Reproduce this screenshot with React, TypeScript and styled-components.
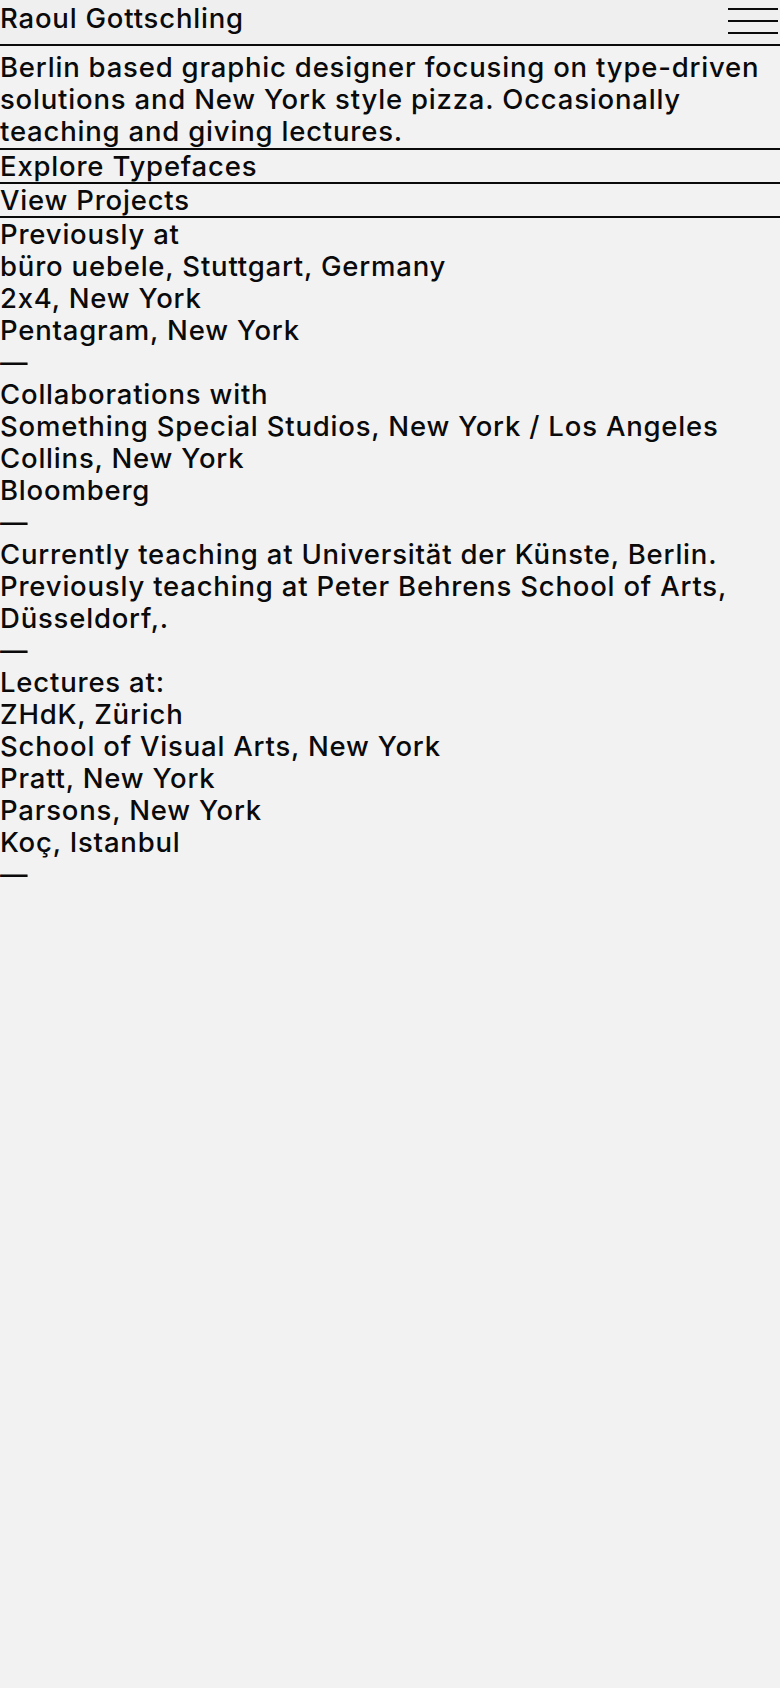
import React from "react";
import styled, { createGlobalStyle } from "styled-components";

const GlobalStyle = createGlobalStyle`
  html, body { margin: 0; padding: 0; background: #f2f2f2; }
  body {
    font-family: Inter, "Liberation Sans", sans-serif;
    color: #0a0a0a;
    -webkit-font-smoothing: antialiased;
  }
`;

const Page = styled.div`
  font-size: 27.5px;
  font-weight: 450;
  line-height: 32px;
  letter-spacing: 0.8px;
  background: #f2f2f2;
  min-height: 1688px;
`;

const Header = styled.header`
  display: flex;
  justify-content: space-between;
  align-items: flex-start;
  height: 44px;
  background: #efefef;
  border-bottom: 2px solid #0a0a0a;
`;

const Title = styled.h1`
  margin: 2px 0 0 0;
  font-size: inherit;
  font-weight: inherit;
  line-height: 32px;
`;

const MenuButton = styled.button`
  display: flex;
  flex-direction: column;
  gap: 10px;
  width: 50px;
  margin: 8px 2px 0 0;
  padding: 0;
  border: 0;
  background: transparent;
  cursor: pointer;
`;

const MenuLine = styled.span`
  display: block;
  width: 100%;
  height: 2px;
  background: #0a0a0a;
`;

const Bio = styled.p`
  margin: 0;
  padding-top: 5px;
  padding-bottom: 1px;
  border-bottom: 2px solid #0a0a0a;
`;

const NavRow = styled.a`
  display: block;
  color: inherit;
  text-decoration: none;
  border-bottom: 2px solid #0a0a0a;
`;

const Info = styled.div`
  display: flex;
  flex-direction: column;
`;

const Line = styled.div``;

const sections: string[][] = [
  ["Previously at", "büro uebele, Stuttgart, Germany", "2x4, New York", "Pentagram, New York"],
  ["Collaborations with", "Something Special Studios, New York / Los Angeles", "Collins, New York", "Bloomberg"],
  [
    "Currently teaching at Universität der Künste, Berlin. Previously teaching at Peter Behrens School of Arts, Düsseldorf,.",
  ],
  ["Lectures at:", "ZHdK, Zürich", "School of Visual Arts, New York", "Pratt, New York", "Parsons, New York", "Koç, Istanbul"],
];

export default function App() {
  return (
    <>
      <GlobalStyle />
      <Page>
        <Header>
          <Title>Raoul Gottschling</Title>
          <MenuButton aria-label="Menu">
            <MenuLine />
            <MenuLine />
            <MenuLine />
          </MenuButton>
        </Header>
        <Bio>
          Berlin based graphic designer focusing on type-driven solutions and New York style pizza. Occasionally
          teaching and giving lectures.
        </Bio>
        <NavRow href="#">Explore Typefaces</NavRow>
        <NavRow href="#">View Projects</NavRow>
        <Info>
          {sections.map((s, i) => (
            <React.Fragment key={i}>
              {s.map((l) => (
                <Line key={l}>{l}</Line>
              ))}
              <Line>—</Line>
            </React.Fragment>
          ))}
        </Info>
      </Page>
    </>
  );
}
